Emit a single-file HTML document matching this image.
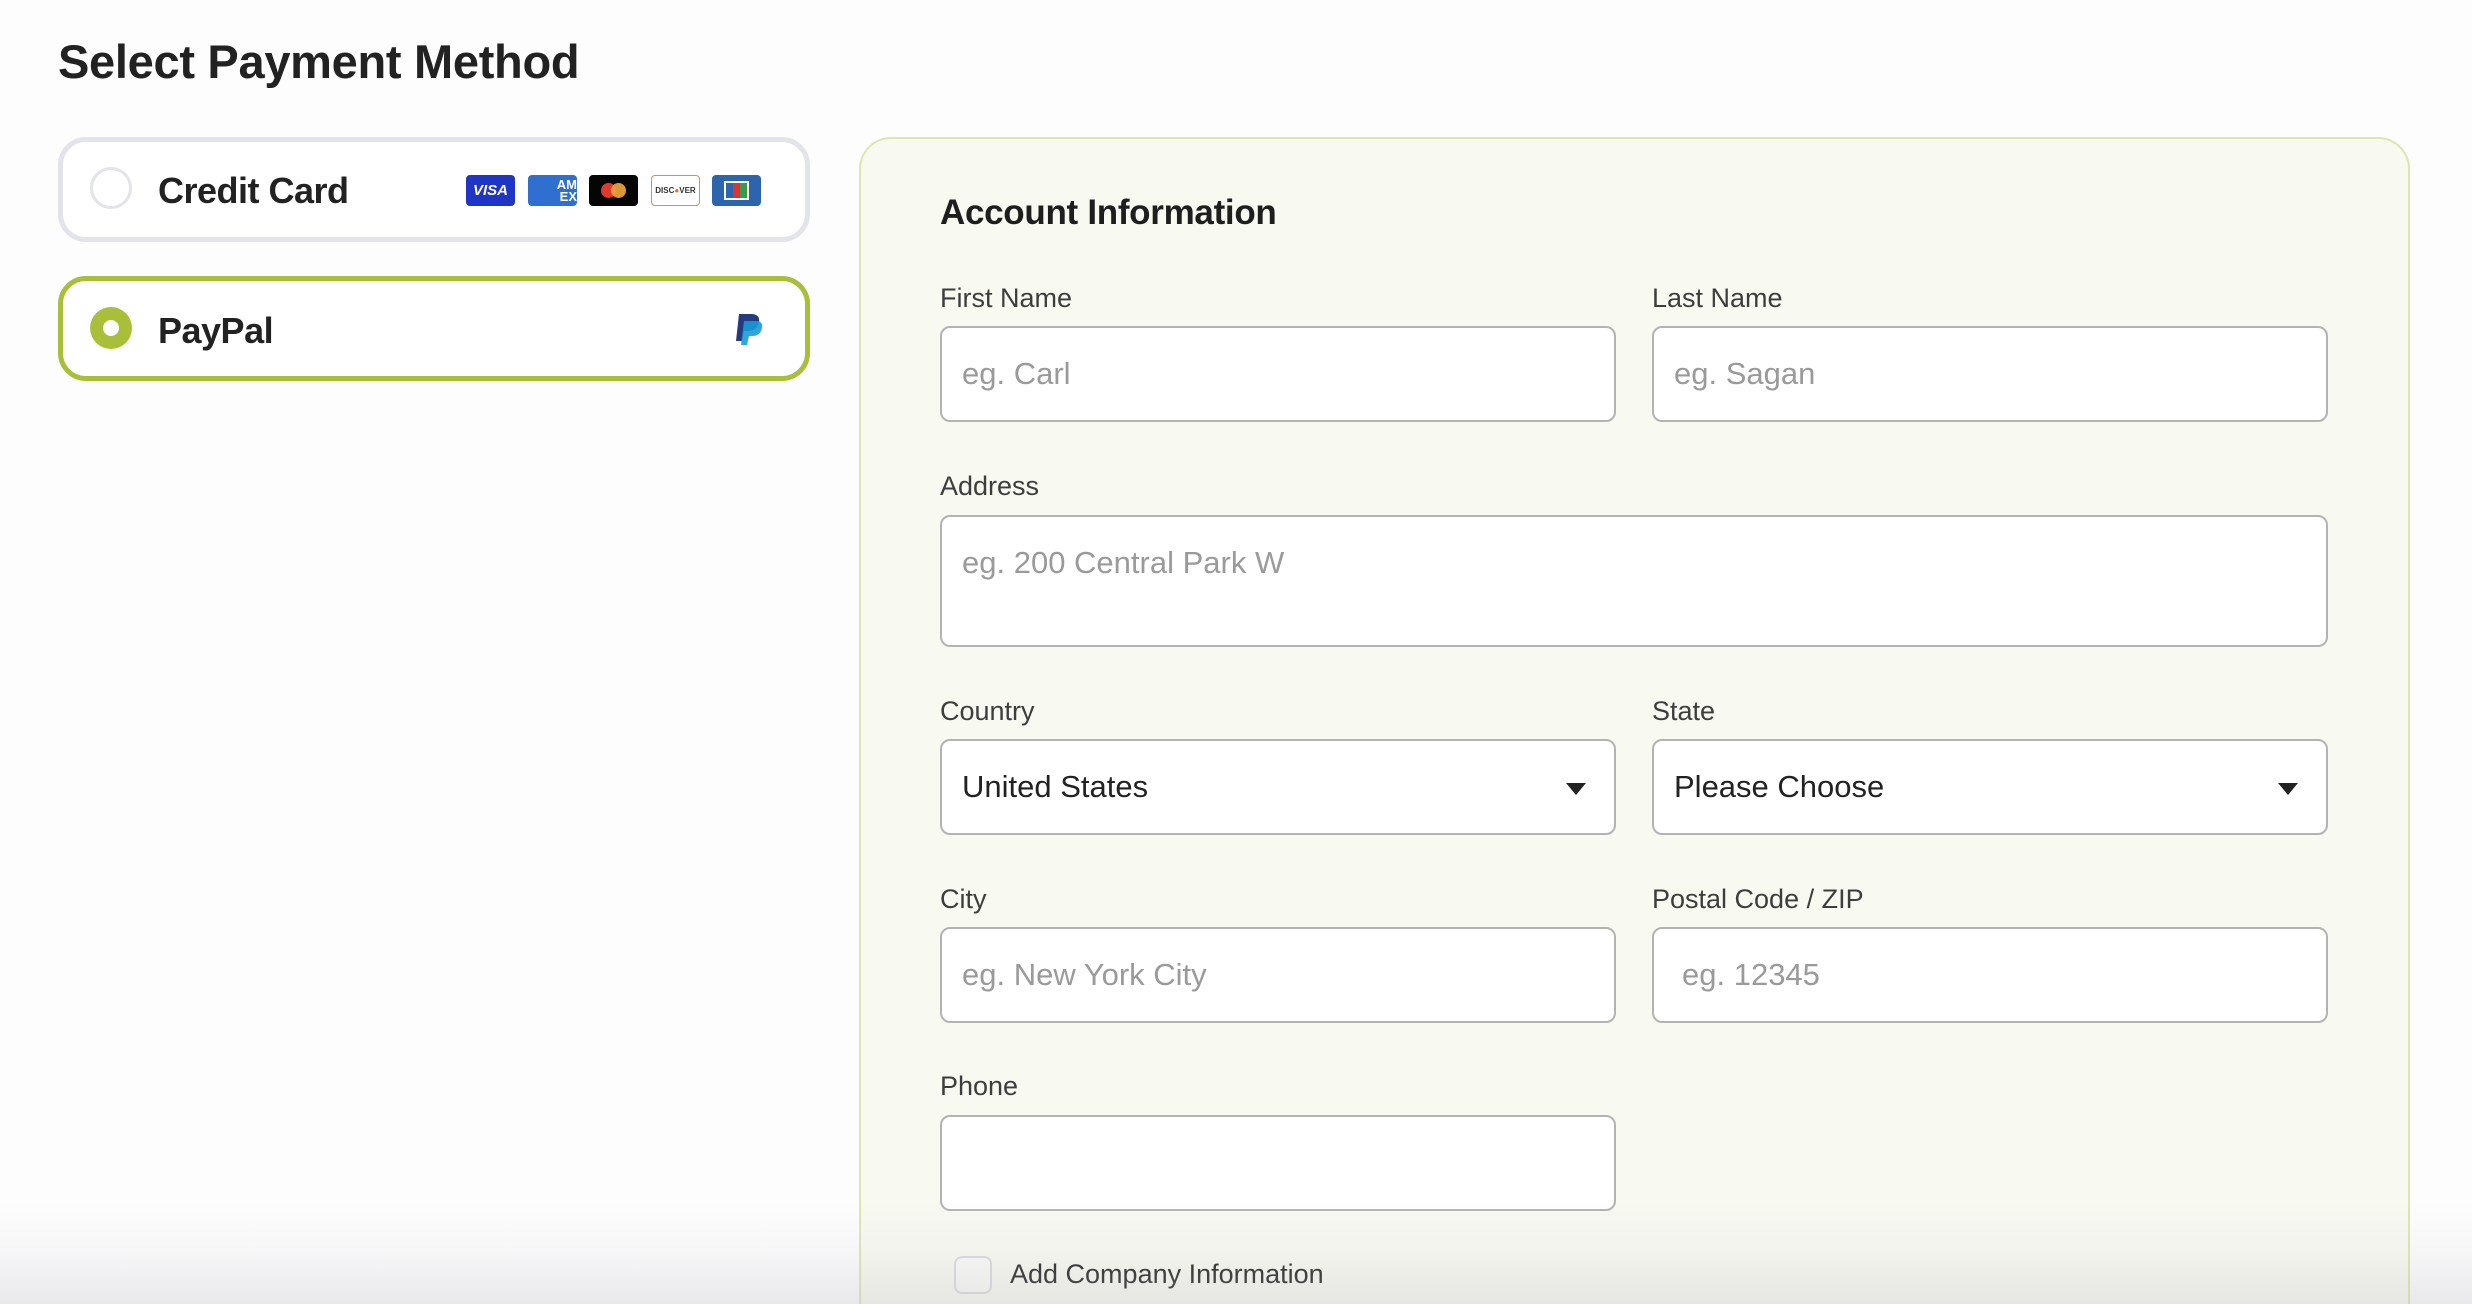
<!DOCTYPE html>
<html><head><meta charset="utf-8"><style>
*{box-sizing:border-box;margin:0;padding:0}
html,body{width:2472px;height:1304px;overflow:hidden}
body{background:#fdfdfe;font-family:"Liberation Sans",Arial,sans-serif;position:relative}
.a{position:absolute}
h1{position:absolute;left:58px;top:34px;font-size:47px;font-weight:bold;color:#222;letter-spacing:-0.3px}
.opt{position:absolute;left:58px;width:752px;height:105px;border-radius:28px;background:#fff}
.radio{position:absolute;left:27px;width:42px;height:42px;border-radius:50%}
.optlabel{position:absolute;left:95px;font-size:36px;font-weight:bold;color:#222;letter-spacing:-0.5px}
.card{position:absolute;top:175px;width:49px;height:31px;border-radius:4px;overflow:hidden}
.panel{position:absolute;left:859px;top:137px;width:1551px;height:1167px;background:#f8f9f1;border:2px solid #dde6b0;border-bottom:none;border-radius:32px 32px 0 0}
.lbl{position:absolute;font-size:27px;color:#3d3d3d}
.inp{position:absolute;background:#fff;border:2px solid #b3b3b3;border-radius:10px;height:96px;font-size:31px;color:#9a9a9a;padding-left:20px;display:flex;align-items:center}
.sel{color:#222}
.tri{position:absolute;right:28px;top:42px;width:0;height:0;border-left:10px solid transparent;border-right:10px solid transparent;border-top:12px solid #222}
</style></head><body>
<h1>Select Payment Method</h1>

<div class="opt" style="top:137px;border:5px solid #e2e4ea">
  <div class="radio" style="top:25px;border:3px solid #e2e4ea"></div>
  <div class="optlabel" style="top:28px">Credit Card</div>
</div>
<div class="card" style="left:466px;background:#1f35c4;color:#fff;font:italic bold 15px 'Liberation Sans';display:flex;align-items:center;justify-content:center">VISA</div>
<div class="card" style="left:528px;background:#2f6fcf;color:#fff;font:bold 13px/12px 'Liberation Sans';text-align:right;padding:4px 0 0">AM<br>EX</div>
<div class="card" style="left:589px;background:#050505"><div class="a" style="left:12px;top:8px;width:15px;height:15px;border-radius:50%;background:#e23a2a"></div><div class="a" style="left:22px;top:8px;width:15px;height:15px;border-radius:50%;background:#eea43d;opacity:.92"></div></div>
<div class="card" style="left:651px;background:#fff;border:1px solid #e48a4a;font:bold 8px 'Liberation Sans';color:#333;display:flex;align-items:center;justify-content:center">DISC<span style="color:#e8701e">●</span>VER</div>
<div class="card" style="left:712px;background:#2d64ae"><div class="a" style="left:12px;top:6px;width:25px;height:19px;border:2px solid #fff;background:linear-gradient(90deg,#2d64ae 33%,#d33 33%,#d33 66%,#3a9a4a 66%)"></div></div>

<div class="opt" style="top:276px;border:5px solid #a9bf3a">
  <div class="radio" style="top:26px;background:#a9bf3a"><div class="a" style="left:13px;top:13px;width:16px;height:16px;border-radius:50%;background:#fff"></div></div>
  <div class="optlabel" style="top:29px">PayPal</div>
</div>
<svg class="a" style="left:733px;top:312px" width="30" height="34" viewBox="0 0 30 34"><path d="M6 2h12c6 0 9 3 8 8-1 6-5 9-11 9h-4l-2 10H3z" fill="#253b80"/><path d="M11 9h12c5 0 7 3 6 7-1 5-4 8-10 8h-3l-2 9H8z" fill="#179bd7" opacity=".9"/></svg>

<div class="panel"></div>
<div class="a" style="left:940px;top:193px;font-size:35px;font-weight:bold;color:#1e1e1e;letter-spacing:-0.3px">Account Information</div>

<div class="lbl" style="left:940px;top:283px">First Name</div>
<div class="lbl" style="left:1652px;top:283px">Last Name</div>
<div class="inp" style="left:940px;top:326px;width:676px">eg. Carl</div>
<div class="inp" style="left:1652px;top:326px;width:676px">eg. Sagan</div>

<div class="lbl" style="left:940px;top:471px">Address</div>
<div class="inp" style="left:940px;top:515px;width:1388px;height:132px;align-items:flex-start;padding-top:28px">eg. 200 Central Park W</div>

<div class="lbl" style="left:940px;top:696px">Country</div>
<div class="lbl" style="left:1652px;top:696px">State</div>
<div class="inp sel" style="left:940px;top:739px;width:676px">United States<div class="tri"></div></div>
<div class="inp sel" style="left:1652px;top:739px;width:676px">Please Choose<div class="tri"></div></div>

<div class="lbl" style="left:940px;top:884px">City</div>
<div class="lbl" style="left:1652px;top:884px">Postal Code / ZIP</div>
<div class="inp" style="left:940px;top:927px;width:676px">eg. New York City</div>
<div class="inp" style="left:1652px;top:927px;width:676px;padding-left:28px">eg. 12345</div>

<div class="lbl" style="left:940px;top:1071px">Phone</div>
<div class="inp" style="left:940px;top:1115px;width:676px"></div>

<div class="a" style="left:954px;top:1256px;width:38px;height:38px;border:2px solid #d8dae0;border-radius:8px;background:#fafbf6"></div>
<div class="a" style="left:1010px;top:1259px;font-size:27px;color:#1e1e1e">Add Company Information</div>

<div class="a" style="left:0;top:1200px;width:2472px;height:104px;background:linear-gradient(180deg,rgba(200,200,205,0) 0%,rgba(200,200,205,.12) 50%,rgba(190,190,195,.32) 100%)"></div>
</body></html>
